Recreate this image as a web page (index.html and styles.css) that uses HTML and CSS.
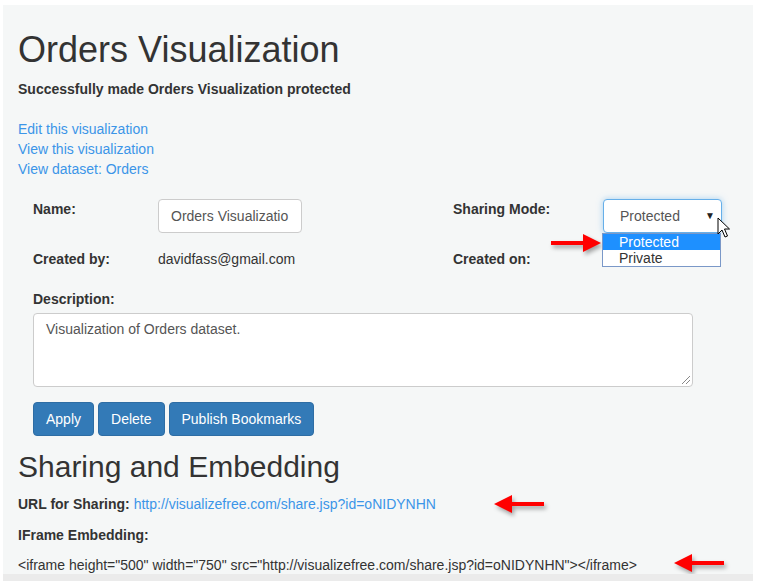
FILE: index.html
```html
<!DOCTYPE html>
<html>
<head>
<meta charset="utf-8">
<link rel="stylesheet" href="styles.css">
</head>
<body>
<div class="panel">
  <h1 class="title">Orders Visualization</h1>
  <p class="status">Successfully made Orders Visualization protected</p>
  <div class="links">
    <a href="#">Edit this visualization</a>
    <a href="#">View this visualization</a>
    <a href="#">View dataset: Orders</a>
  </div>

  <div class="form">
    <div class="row">
      <div class="label">Name:</div>
      <div class="value"><div class="input">Orders Visualizatio</div></div>
      <div class="label label-right">Sharing Mode:</div>
      <div class="value select-wrap">
        <div class="select"><span>Protected</span><span class="caret">&#9660;</span></div>
        <div class="menu">
          <div class="opt sel">Protected</div>
          <div class="opt">Private</div>
        </div>
      </div>
    </div>
    <div class="row row2">
      <div class="label">Created by:</div>
      <div class="value text">davidfass@gmail.com</div>
      <div class="label label-right">Created on:</div>
      <div class="value"></div>
    </div>
    <div class="label desc-label">Description:</div>
    <div class="textarea">Visualization of Orders dataset.<span class="grip"></span></div>
    <div class="buttons">
      <button class="btn">Apply</button>
      <button class="btn">Delete</button>
      <button class="btn">Publish Bookmarks</button>
    </div>
  </div>

  <h2 class="subtitle">Sharing and Embedding</h2>
  <p class="line url"><b>URL for Sharing:</b> <a href="#">http://visualizefree.com/share.jsp?id=oNIDYNHN</a></p>
  <p class="line iframe-label"><b>IFrame Embedding:</b></p>
  <p class="line code">&lt;iframe height="500" width="750" src="http://visualizefree.com/share.jsp?id=oNIDYNHN"&gt;&lt;/iframe&gt;</p>

  <svg class="arrow a1" width="52" height="24" viewBox="0 0 52 24"><path d="M0 10 H32 V3 L50 12 L32 21 V14 H0 Z" fill="#f00"/></svg>
  <svg class="arrow a2" width="52" height="24" viewBox="0 0 52 24"><path d="M52 10 H20 V3 L2 12 L20 21 V14 H52 Z" fill="#f00"/></svg>
  <svg class="arrow a3" width="52" height="24" viewBox="0 0 52 24"><path d="M52 10 H20 V3 L2 12 L20 21 V14 H52 Z" fill="#f00"/></svg>
  <svg class="cursor" width="14" height="22" viewBox="0 0 14 22"><path d="M1 1 L1 17 L5 13 L8 20 L10.5 19 L7.5 12 L12.5 12 Z" fill="#fff" stroke="#000" stroke-width="1" stroke-linejoin="round"/></svg>
</div>
<div class="hscroll"></div>
</body>
</html>
```

FILE: styles.css
```css
html, body {
  margin: 0;
  padding: 0;
  background: #fff;
}
body {
  font-family: "Liberation Sans", Arial, sans-serif;
  color: #333;
}
.panel {
  position: relative;
  margin: 5px 0 0 3px;
  width: 750px;
  height: 569px;
  box-sizing: border-box;
  padding: 0 15px;
  background: #f5f7f7;
  overflow: hidden;
  display: flex;
  flex-direction: column;
}
.hscroll {
  margin-left: 3px;
  width: 750px;
  height: 7px;
  background: #ebebeb;
}
.title {
  margin: 25px 0 0;
  font-size: 36px;
  line-height: 40px;
  font-weight: normal;
}
.status {
  margin: 10px 0 0;
  font-size: 14px;
  line-height: 18px;
  font-weight: bold;
}
.links {
  margin-top: 21px;
  display: flex;
  flex-direction: column;
  align-items: flex-start;
}
a {
  color: #3b95e8;
  text-decoration: none;
}
.links a {
  font-size: 14px;
  line-height: 20px;
}
.form {
  margin-top: 20px;
  padding-left: 15px;
  display: flex;
  flex-direction: column;
  align-items: flex-start;
}
.row {
  display: grid;
  grid-template-columns: 125px 295px 150px 119px;
  align-items: start;
}
.row2 {
  margin-top: 16px;
}
.label {
  font-size: 14px;
  line-height: 18px;
  font-weight: bold;
  padding-top: 1px;
}
.text {
  font-size: 14px;
  line-height: 18px;
  padding-top: 1px;
}
.input {
  width: 144px;
  height: 34px;
  box-sizing: border-box;
  border: 1px solid #ccc;
  border-radius: 4px;
  background: #fff;
  padding: 6px 12px;
  font-size: 14px;
  line-height: 20px;
  color: #555;
  white-space: nowrap;
  overflow: hidden;
}
.select-wrap {
  position: relative;
}
.select {
  width: 119px;
  height: 34px;
  box-sizing: border-box;
  border: 1px solid #66afe9;
  border-radius: 4px;
  box-shadow: 0 0 6px rgba(102, 175, 233, 0.55);
  background: #fff;
  display: flex;
  align-items: center;
  justify-content: space-between;
  padding: 0 6px 0 16px;
  font-size: 14px;
  color: #555;
}
.caret {
  font-size: 10px;
  color: #222;
  margin-top: -2px;
}
.menu {
  position: absolute;
  left: -1px;
  top: 34px;
  width: 119px;
  box-sizing: border-box;
  border: 1px solid #7a98c8;
  background: #fff;
  z-index: 2;
}
.opt {
  font-size: 14px;
  line-height: 16px;
  padding-left: 16px;
  color: #333;
}
.opt.sel {
  background: #1e90ff;
  color: #fff;
}
.desc-label {
  margin-top: 21px;
}
.textarea {
  position: relative;
  margin-top: 5px;
  width: 660px;
  height: 74px;
  box-sizing: border-box;
  border: 1px solid #ccc;
  border-radius: 4px;
  background: #fff;
  padding: 6px 12px;
  font-size: 14px;
  line-height: 18px;
  color: #555;
}
.grip {
  position: absolute;
  right: 2px;
  bottom: 2px;
  width: 8px;
  height: 8px;
  background: linear-gradient(135deg, transparent 45%, #888 45%, #888 52%, transparent 52%, transparent 72%, #888 72%, #888 79%, transparent 79%);
}
.buttons {
  margin-top: 15px;
  display: flex;
  gap: 4px;
}
.btn {
  height: 34px;
  box-sizing: border-box;
  padding: 6px 12px;
  border: 1px solid #2e6da4;
  border-radius: 4px;
  background: #337ab7;
  color: #fff;
  font-family: "Liberation Sans", Arial, sans-serif;
  font-size: 14px;
  line-height: 20px;
}
.subtitle {
  margin: 14px 0 0;
  font-size: 30px;
  line-height: 33px;
  font-weight: normal;
}
.line {
  margin: 0;
  font-size: 14px;
  line-height: 18px;
}
.url {
  margin-top: 12px;
}
.iframe-label {
  margin-top: 13px;
}
.code {
  margin-top: 12px;
}
.arrow {
  position: absolute;
  filter: drop-shadow(2px 3px 2px rgba(0, 0, 0, 0.35));
}
.a1 {
  left: 548px;
  top: 226px;
}
.a2 {
  left: 489px;
  top: 487px;
}
.a3 {
  left: 669px;
  top: 546px;
}
.cursor {
  position: absolute;
  left: 714px;
  top: 212px;
  z-index: 3;
}
```
